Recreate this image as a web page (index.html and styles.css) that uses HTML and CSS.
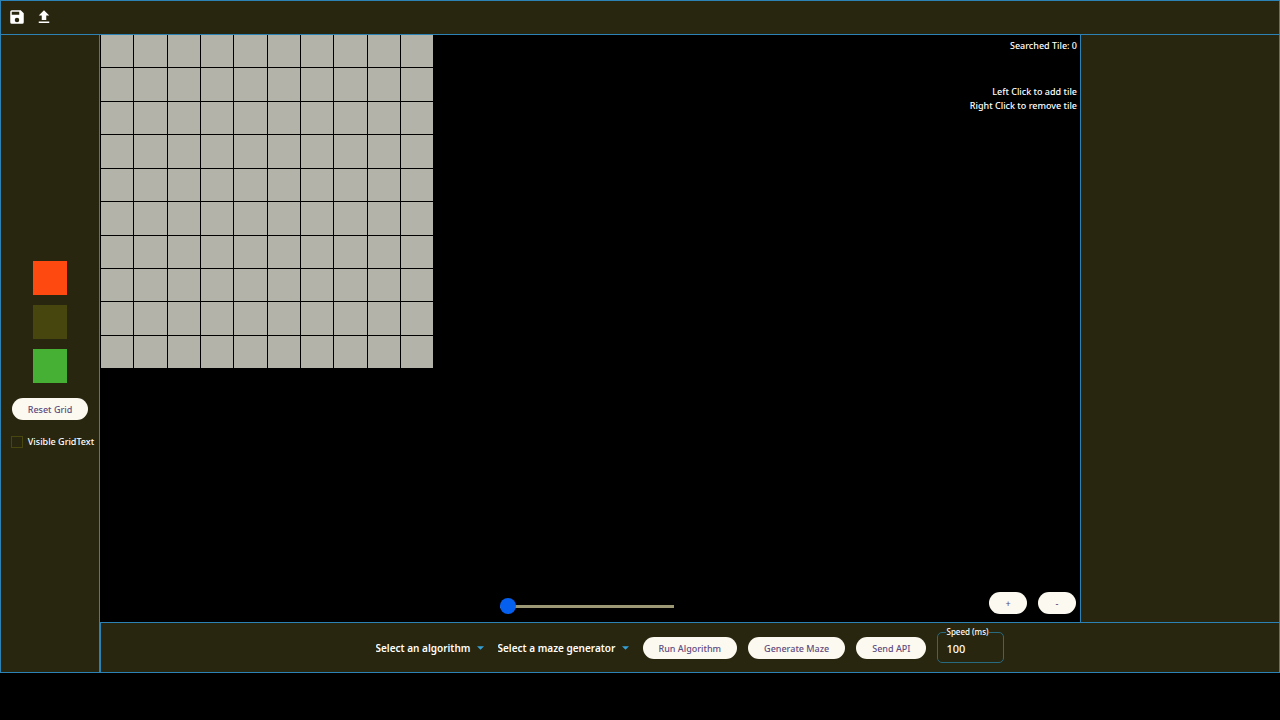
FILE: index.html
```html
<!DOCTYPE html>
<html lang="en">
<head>
<meta charset="utf-8">
<title>Pathfinding Grid</title>
<link rel="stylesheet" href="styles.css">
</head>
<body>
<div class="app">
  <header class="topbar">
    <button class="icon-button" type="button" aria-label="Save">
      <svg viewBox="0 0 24 24" width="18" height="18"><path fill="currentColor" d="M17 3H5a2 2 0 0 0-2 2v14a2 2 0 0 0 2 2h14a2 2 0 0 0 2-2V7zm-5 16a3 3 0 1 1 0-6 3 3 0 0 1 0 6zm3-10H5V5h10z"/></svg>
    </button>
    <button class="icon-button" type="button" aria-label="Upload">
      <svg viewBox="0 0 24 24" width="18" height="18"><path fill="currentColor" d="M9 16h6v-6h4l-7-7-7 7h4zm-4 2h14v2H5z"/></svg>
    </button>
  </header>
  <aside class="tools">
    <div class="swatches">
      <button class="swatch swatch-end" type="button" aria-label="End tile"></button>
      <button class="swatch swatch-wall" type="button" aria-label="Wall tile"></button>
      <button class="swatch swatch-start" type="button" aria-label="Start tile"></button>
    </div>
    <button class="pill" type="button">Reset Grid</button>
    <label class="check"><input type="checkbox">Visible GridText</label>
  </aside>
  <main class="canvas">
    <div class="grid" id="grid"></div>
    <div class="info">
      <p class="count">Searched Tile: 0</p>
      <p>Left Click to add tile</p>
      <p>Right Click to remove tile</p>
    </div>
    <div class="canvas-foot">
      <input class="slider" type="range" min="0" max="100" value="0" aria-label="Step">
      <div class="zoom">
        <button class="pill pill-zoom" type="button">+</button>
        <button class="pill pill-zoom" type="button">-</button>
      </div>
    </div>
  </main>
  <aside class="details"></aside>
  <footer class="controls">
    <div class="picker">
      <select aria-label="Algorithm"><option>Select an algorithm</option></select>
      <svg class="caret" viewBox="0 0 8 4" width="7" height="4"><path fill="currentColor" d="M0 0h8L4 4z"/></svg>
    </div>
    <div class="picker">
      <select aria-label="Maze generator"><option>Select a maze generator</option></select>
      <svg class="caret" viewBox="0 0 8 4" width="7" height="4"><path fill="currentColor" d="M0 0h8L4 4z"/></svg>
    </div>
    <div class="actions">
      <button class="pill" type="button">Run Algorithm</button>
      <button class="pill" type="button">Generate Maze</button>
      <button class="pill" type="button">Send API</button>
      <fieldset class="speed">
        <legend><label for="speed">Speed (ms)</label></legend>
        <input id="speed" type="text" inputmode="numeric" value="100">
      </fieldset>
    </div>
  </footer>
</div>
<script src="grid.js"></script>
</body>
</html>
```
FILE: styles.css
```css
:root {
  --panel: #28260f;
  --line: #2c82b4;
  --pill: #fcfaf0;
  --pill-text: #5f4b80;
}

* { box-sizing: border-box; }

body {
  margin: 0;
  background: #000;
  color: #fff;
  font: 500 9px/14px "Noto Sans", "Open Sans", sans-serif;
}

button, input, select { font: inherit; color: inherit; }
button { border: 0; padding: 0; cursor: pointer; }
p { margin: 0; }

.app {
  display: grid;
  grid-template-columns: 100px 1fr 200px;
  grid-template-rows: auto 1fr auto;
  min-height: calc(100vh - 47px);
}

.topbar {
  grid-column: 1 / -1;
  display: flex;
  align-items: center;
  gap: 9px;
  height: 35px;
  padding: 0 7px 2px;
  background: var(--panel);
  border: 1px solid var(--line);
}

.icon-button { display: flex; background: none; }

.tools {
  grid-row: 2 / 4;
  display: flex;
  flex-direction: column;
  align-items: center;
  justify-content: center;
  padding-top: 2px;
  background: var(--panel);
  border: 1px solid var(--line);
  border-top: 0;
}

.swatches { display: grid; gap: 10px; margin-bottom: 15px; }
.swatch { width: 34px; height: 34px; }
.swatch-end { background: #fe4a10; }
.swatch-wall { background: #48460f; }
.swatch-start { background: #46b035; }

.pill {
  height: 22px;
  padding: 2px 16px 0;
  border-radius: 11px;
  background: var(--pill);
  color: var(--pill-text);
  white-space: nowrap;
}

.pill-zoom { width: 38px; padding: 2px 0 0; }

.check {
  display: flex;
  align-items: center;
  gap: 5px;
  margin-top: 15px;
  padding-left: 5px;
  white-space: nowrap;
}

.check input {
  appearance: none;
  width: 12px;
  height: 12px;
  margin: 0;
  border: 1px solid #48460f;
}

.canvas {
  display: grid;
  grid-template-columns: 34% 1fr;
  grid-template-rows: 1fr auto;
  align-items: start;
}

.grid {
  display: grid;
  grid-template-columns: repeat(10, 1fr);
  gap: 1px;
  aspect-ratio: 1;
  padding-left: 1px;
}

.tile { background: #b4b3a9; }

.info { padding: 4px 3px; text-align: right; }
.count { margin-bottom: 32px; }

.canvas-foot {
  grid-column: 1 / -1;
  display: grid;
  grid-template-columns: 1fr 176px 1fr;
  align-items: center;
  padding: 0 4px 8px 0;
}

.slider {
  grid-column: 2;
  appearance: none;
  width: 100%;
  height: 16px;
  margin: 6px 0 0;
  background: linear-gradient(#9c9875, #9c9875) left / 174px 3px no-repeat;
}

.slider::-webkit-slider-thumb {
  appearance: none;
  width: 16px;
  height: 16px;
  border-radius: 50%;
  background: #0560f0;
}

.zoom { display: flex; justify-content: flex-end; gap: 11px; }

.details {
  background: var(--panel);
  border-left: 1px solid var(--line);
  border-right: 1px solid var(--line);
}

.controls {
  grid-column: 2 / 4;
  display: flex;
  align-items: center;
  justify-content: center;
  gap: 14px;
  height: 51px;
  background: var(--panel);
  border: 1px solid var(--line);
}

.picker { display: flex; align-items: center; gap: 6px; font-size: 10px; font-weight: 600; }

.picker select {
  appearance: none;
  padding: 0;
  border: 0;
  background: none;
}

.picker option { color: #000; }
.caret { color: #35a0d8; }

.actions { display: flex; align-items: center; gap: 11px; }

.speed {
  width: 67px;
  margin: 0 0 7px;
  padding: 0 8px 5px;
  border: 1px solid #286a80;
  border-radius: 5px;
}

.speed legend { padding: 0; font-size: 8px; }

.speed input {
  display: block;
  width: 100%;
  height: 18px;
  padding: 1px 0 0;
  border: 0;
  outline: 0;
  background: none;
  font-size: 11px;
}
```
FILE: grid.js
```javascript
const grid = document.getElementById("grid");
for (let i = 0; i < 100; i++) {
  const tile = document.createElement("div");
  tile.className = "tile";
  grid.append(tile);
}
```
